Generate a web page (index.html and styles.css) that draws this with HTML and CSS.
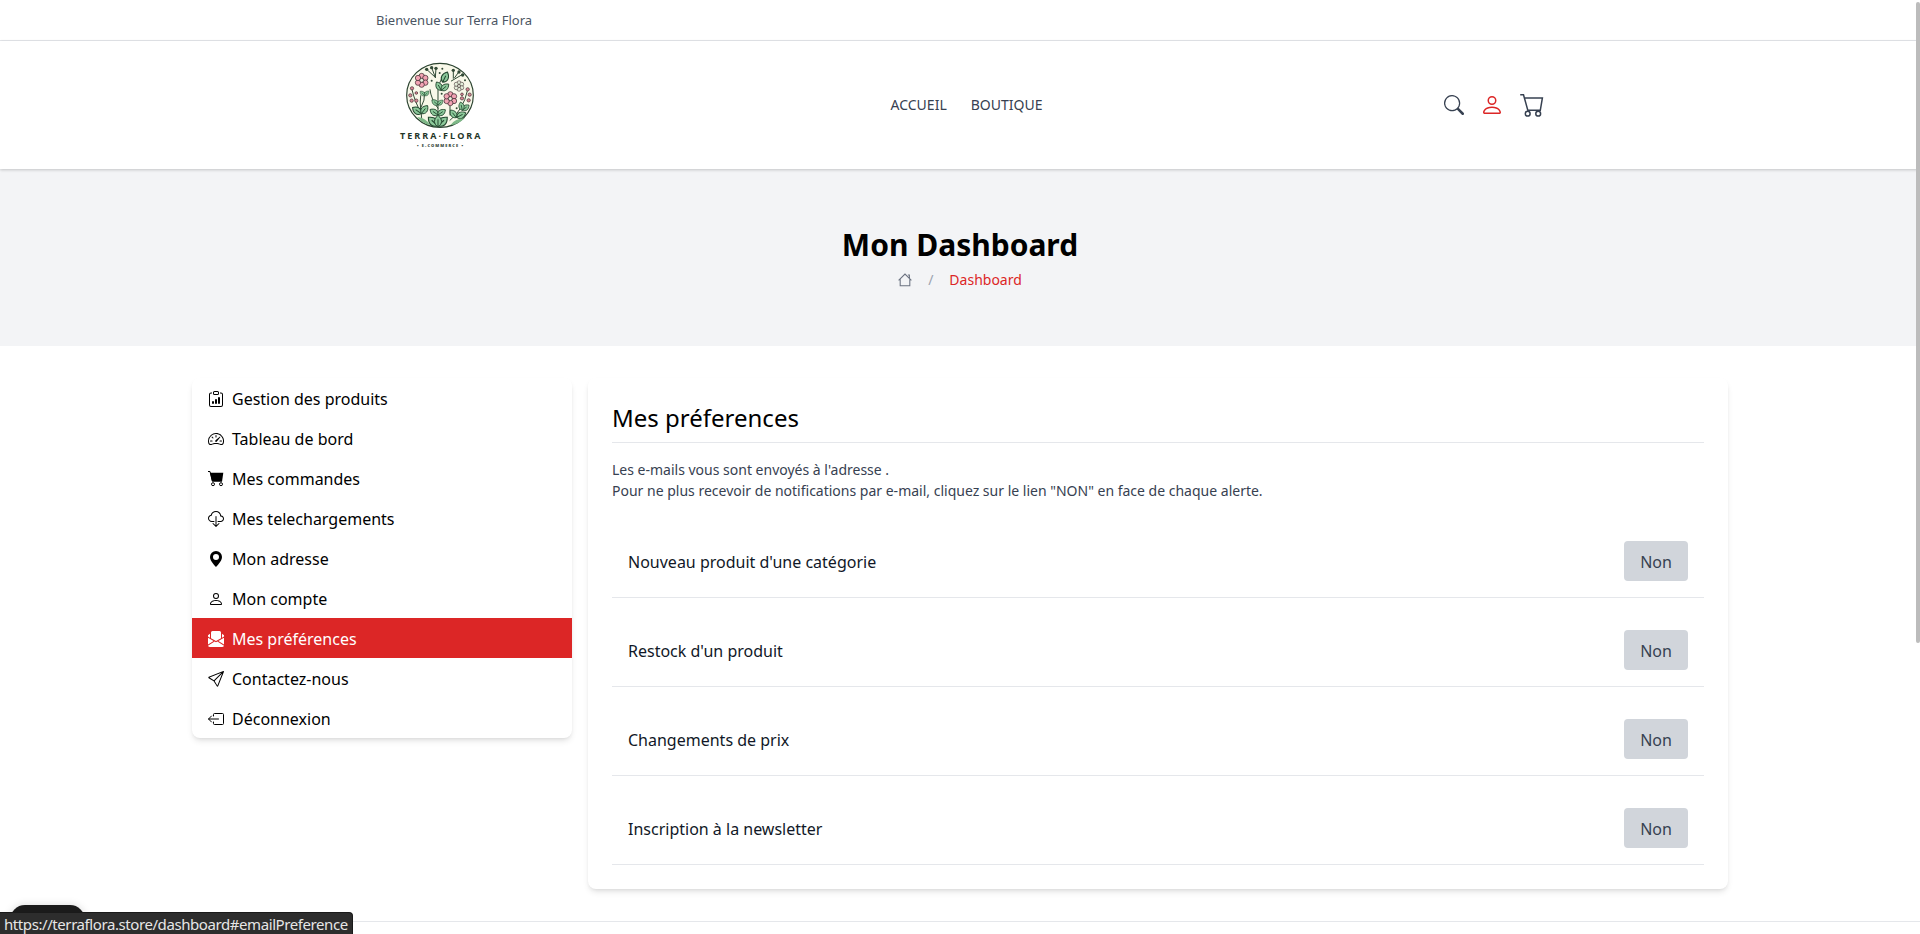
FILE: index.html
```html
<!DOCTYPE html>
<html lang="fr">
<head>
<meta charset="utf-8">
<title>Terra Flora</title>
<link rel="stylesheet" href="styles.css">
</head>
<body>
<div class="topbar"><div class="container">Bienvenue sur Terra Flora</div></div>
<header class="header">
  <div class="container header-row">
    <svg class="logo" viewBox="0 0 128 128">
      <defs>
        <path id="leaf" d="M0 0C-14-8-14-22 0-34C14-22 14-8 0 0ZM0 0V-22" stroke="#23472f" stroke-width="3"/>
        <g id="flower" stroke="#3d2a2e" stroke-width="2.2">
          <circle cy="-13" r="8"/><circle cx="11" cy="-7" r="8"/><circle cx="11" cy="7" r="8"/><circle cy="13" r="8"/><circle cx="-11" cy="7" r="8"/><circle cx="-11" cy="-7" r="8"/><circle r="6" fill="#e6eedb"/>
        </g>
      </defs>
      <g transform="translate(14 14) scale(.3333)">
        <ellipse cx="150" cy="121" rx="100" ry="96" fill="#f8f8e9" stroke="#2b4330" stroke-width="3.5"/>
        <g fill="none" stroke="#2f4a35" stroke-width="3" stroke-linecap="round">
          <path d="M144 214V95L160 60M95 190C94 170 88 150 92 122M92 170Q76 145 66 104M92 160Q106 135 104 112M180 196Q220 164 232 108M136 67L110 43M136 67L125 38M136 67L138 40M184 78L218 58M190 70L190 46M194 68L207 50M144 160Q123 132 120 104M180 152V180"/>
        </g>
        <g fill="#8cc99a">
          <use href="#leaf" transform="translate(143 212) rotate(-48) scale(1.1)"/><use href="#leaf" transform="translate(144 212) rotate(48) scale(1.1)"/>
          <use href="#leaf" transform="translate(144 215)"/>
          <use href="#leaf" transform="translate(144 180) rotate(-55) scale(.85)"/><use href="#leaf" transform="translate(144 180) rotate(55) scale(.8)"/>
          <use href="#leaf" transform="translate(144 150) rotate(-50) scale(.7)"/><use href="#leaf" transform="translate(144 150) rotate(45) scale(.6)"/>
          <use href="#leaf" transform="translate(154 106) rotate(-30) scale(.85)"/><use href="#leaf" transform="translate(154 106) rotate(50) scale(.85)"/>
          <use href="#leaf" transform="translate(158 82) rotate(25) scale(1)"/>
          <use href="#leaf" transform="translate(94 176) rotate(-55) scale(.95)"/><use href="#leaf" transform="translate(94 176) rotate(38) scale(.9)"/>
          <use href="#leaf" transform="translate(199 188) rotate(-38) scale(.85)"/><use href="#leaf" transform="translate(200 187) rotate(64) scale(.9)"/>
          <use href="#leaf" transform="translate(217 166) rotate(52) scale(.75)"/><use href="#leaf" transform="translate(217 166) rotate(-12) scale(.75)"/>
          <use href="#leaf" transform="translate(104 122) rotate(-45) scale(.55)"/><use href="#leaf" transform="translate(104 122) rotate(42) scale(.55)"/>
        </g>
        <path d="M82 186Q108 188 121 211Q94 204 82 186ZM181 211Q195 190 224 190Q206 208 181 211Z" fill="#7db887"/>
        <use href="#flower" x="95" y="76" fill="#f2a3b3"/><use href="#flower" x="181" y="131" fill="#f2a3b3"/>
        <g transform="translate(207 93) scale(.75)"><use href="#flower" fill="#e4efda"/></g>
        <g fill="#d58593" stroke="#432e30" stroke-width="2">
          <circle cx="66" cy="100" r="5"/><circle cx="61" cy="121" r="5"/><circle cx="79" cy="114" r="4"/><circle cx="65" cy="137" r="5"/><circle cx="79" cy="137" r="5"/>
          <circle cx="233" cy="103" r="5"/><circle cx="239" cy="119" r="5"/><circle cx="216" cy="118" r="4"/><circle cx="216" cy="130" r="5"/><circle cx="236" cy="136" r="5"/>
        </g>
        <g fill="#314936"><circle cx="110" cy="43" r="5"/><circle cx="125" cy="38" r="5"/><circle cx="138" cy="40" r="5"/><circle cx="190" cy="46" r="5"/><circle cx="207" cy="51" r="5"/><circle cx="218" cy="60" r="5"/><circle cx="157" cy="41" r="3"/><circle cx="149" cy="54" r="3"/><circle cx="125" cy="77" r="3"/><circle cx="225" cy="76" r="3"/><circle cx="155" cy="116" r="3"/><circle cx="200" cy="160" r="3"/></g>
      </g>
      <text class="logo-name" x="24" y="97.500" textLength="80.500" lengthAdjust="spacing">TERRA·FLORA</text>
      <text class="logo-sub" x="41" y="105.500" textLength="46" lengthAdjust="spacing">• E-COMMERCE •</text>
    </svg>
    <nav class="nav"><a>ACCUEIL</a><a>BOUTIQUE</a></nav>
    <div class="actions">
      <svg class="search" viewBox="0 0 16 16"><path d="M11.742 10.344a6.5 6.5 0 1 0-1.397 1.398h-.001c.03.04.062.078.098.115l3.85 3.85a1 1 0 0 0 1.415-1.414l-3.85-3.85a1.007 1.007 0 0 0-.115-.1zM12 6.5a5.5 5.5 0 1 1-11 0 5.5 5.5 0 0 1 11 0z"/></svg>
      <svg class="user" viewBox="0 0 16 16"><path d="M8 8a3 3 0 1 0 0-6 3 3 0 0 0 0 6zm2-3a2 2 0 1 1-4 0 2 2 0 0 1 4 0zm4 8c0 1-1 1-1 1H3s-1 0-1-1 1-4 6-4 6 3 6 4zm-1-.004c-.001-.246-.154-.986-.832-1.664C11.516 10.68 10.289 10 8 10c-2.29 0-3.516.68-4.168 1.332-.678.678-.83 1.418-.832 1.664h10z"/></svg>
      <svg class="cart" viewBox="0 0 24 24"><g fill="none" stroke="currentColor" stroke-width="1.500"><path d="M.2 1.700H3.500L7.800 17.300H20.300L22.400 5H4.400"/><circle cx="7.700" cy="20.700" r="2.400"/><circle cx="18.200" cy="20.700" r="2.400"/></g></svg>
    </div>
  </div>
</header>
<section class="hero">
  <h1>Mon Dashboard</h1>
  <div class="crumbs">
    <svg viewBox="0 0 16 16"><path fill="none" stroke="currentColor" stroke-width="1.200" d="M.7 8.500L8 1.200L15.300 8.500M2.500 7V14.500H13.500V7M11.300 2.200H13V6"/></svg>
    <span class="slash">/</span><span class="current">Dashboard</span>
  </div>
</section>
<main class="layout">
  <aside class="menu">
    <a><svg viewBox="0 0 16 16"><path d="M4 11a1 1 0 1 1 2 0v1a1 1 0 1 1-2 0v-1zm6-4a1 1 0 1 1 2 0v5a1 1 0 1 1-2 0V7zM7 9a1 1 0 0 1 2 0v3a1 1 0 1 1-2 0V9z"/><path d="M4 1.500H3a2 2 0 0 0-2 2V14a2 2 0 0 0 2 2h10a2 2 0 0 0 2-2V3.500a2 2 0 0 0-2-2h-1v1h1a1 1 0 0 1 1 1V14a1 1 0 0 1-1 1H3a1 1 0 0 1-1-1V3.500a1 1 0 0 1 1-1h1v-1z"/><path d="M9.500 1a.5.5 0 0 1 .5.5v1a.5.5 0 0 1-.5.5h-3a.5.5 0 0 1-.5-.5v-1a.5.5 0 0 1 .5-.5h3zm-3-1A1.500 1.500 0 0 0 5 1.500v1A1.500 1.500 0 0 0 6.500 4h3A1.500 1.500 0 0 0 11 2.500v-1A1.500 1.500 0 0 0 9.500 0h-3z"/></svg>Gestion des produits</a>
    <a><svg viewBox="0 0 16 16"><path d="M8 4a.5.5 0 0 1 .5.5V6a.5.5 0 0 1-1 0V4.500A.5.5 0 0 1 8 4zM3.732 5.732a.5.5 0 0 1 .707 0l.915.914a.5.5 0 1 1-.708.708l-.914-.915a.5.5 0 0 1 0-.707zM2 10a.5.5 0 0 1 .5-.5h1.586a.5.5 0 0 1 0 1H2.500A.5.5 0 0 1 2 10zm9.500 0a.5.5 0 0 1 .5-.5h1.500a.5.5 0 0 1 0 1H12a.5.5 0 0 1-.5-.5zm.754-4.246a.389.389 0 0 0-.527-.02L7.547 9.310a.91.91 0 1 0 1.302 1.258l3.434-4.297a.389.389 0 0 0-.029-.518z"/><path fill-rule="evenodd" d="M0 10a8 8 0 1 1 15.547 2.661c-.442 1.253-1.845 1.602-2.932 1.250C11.309 13.488 9.475 13 8 13c-1.474 0-3.310.488-4.615.911-1.087.352-2.490.003-2.932-1.250A7.988 7.988 0 0 1 0 10zm8-7a7 7 0 0 0-6.603 9.329c.203.575.923.876 1.680.630C4.397 12.533 6.358 12 8 12s3.604.532 4.923.960c.757.245 1.477-.056 1.680-.631A7 7 0 0 0 8 3z"/></svg>Tableau de bord</a>
    <a><svg viewBox="0 0 16 16"><path fill="none" stroke="currentColor" d="M0 .5H2L4.300 10"/><path d="M2 1.800H15.300L14 10.800H4.200Z"/><g fill="none" stroke="currentColor"><circle cx="5" cy="13.200" r="1.500"/><circle cx="13" cy="13.200" r="1.500"/></g></svg>Mes commandes</a>
    <a><svg viewBox="0 0 16 16"><path d="M4.406 1.342A5.530 5.530 0 0 1 8 0c2.690 0 4.923 2 5.166 4.579C14.758 4.804 16 6.137 16 7.773 16 9.569 14.502 11 12.687 11H10a.5.5 0 0 1 0-1h2.688C13.979 10 15 8.988 15 7.773c0-1.216-1.020-2.228-2.313-2.228h-.5v-.5C12.188 2.825 10.328 1 8 1a4.530 4.530 0 0 0-2.941 1.100c-.757.652-1.153 1.438-1.153 2.055v.448l-.445.049C2.064 4.805 1 5.952 1 7.318 1 8.785 2.230 10 3.781 10H6a.5.5 0 0 1 0 1H3.781C1.708 11 0 9.366 0 7.318c0-1.763 1.266-3.223 2.942-3.593.143-.863.698-1.723 1.464-2.383z"/><path d="M7.646 15.854a.5.5 0 0 0 .708 0l3-3a.5.5 0 0 0-.708-.708L8.500 14.293V5.500a.5.5 0 0 0-1 0v8.793l-2.146-2.147a.5.5 0 0 0-.708.708l3 3z"/></svg>Mes telechargements</a>
    <a><svg viewBox="0 0 16 16"><path d="M8 16s6-5.686 6-10A6 6 0 0 0 2 6c0 4.314 6 10 6 10zm0-7a3 3 0 1 1 0-6 3 3 0 0 1 0 6z"/></svg>Mon adresse</a>
    <a><svg viewBox="0 0 16 16"><path d="M8 8a3 3 0 1 0 0-6 3 3 0 0 0 0 6zm2-3a2 2 0 1 1-4 0 2 2 0 0 1 4 0zm4 8c0 1-1 1-1 1H3s-1 0-1-1 1-4 6-4 6 3 6 4zm-1-.004c-.001-.246-.154-.986-.832-1.664C11.516 10.680 10.289 10 8 10c-2.290 0-3.516.680-4.168 1.332-.678.678-.830 1.418-.832 1.664h10z"/></svg>Mon compte</a>
    <a class="active"><svg viewBox="0 0 16 16"><path d="M4.500 0H11.500Q13 0 13 1.500V7.200L8 9.900L3 7.200V1.500Q3 0 4.500 0ZM2 2.700V6.700L0 5.500V4.300ZM14 2.700V6.700L16 5.500V4.300ZM0 6.700L5.600 10L0 13.500ZM16 6.700L10.400 10L16 13.500ZM0 14.700L6.600 10.600L8 11.300L9.400 10.600L16 14.700Q15.500 16 14 16H2Q.5 16 0 14.700Z"/></svg>Mes préférences</a>
    <a><svg viewBox="0 0 16 16"><path d="M15.854.146a.5.5 0 0 1 .110.540l-5.819 14.547a.75.75 0 0 1-1.329.124l-3.178-4.995L.643 7.184a.75.75 0 0 1 .124-1.330L15.314.037a.5.5 0 0 1 .540.110ZM6.636 10.070l2.761 4.338L14.130 2.576 6.636 10.070Zm6.787-8.201L1.591 6.602l4.339 2.760 7.494-7.493Z"/></svg>Contactez-nous</a>
    <a><svg viewBox="0 0 16 16"><path fill="none" stroke="currentColor" stroke-linecap="round" stroke-linejoin="round" d="M5.500 5V3.500Q5.500 2.500 6.500 2.500H14.500Q15.500 2.500 15.500 3.500V12.500Q15.500 13.500 14.500 13.500H6.500Q5.500 13.500 5.500 12.500V11M10.500 8H.7M3.500 5L.5 8L3.500 11"/></svg>Déconnexion</a>
  </aside>
  <section class="panel">
    <h2>Mes préferences</h2>
    <p>Les e-mails vous sont envoyés à l'adresse .<br>Pour ne plus recevoir de notifications par e-mail, cliquez sur le lien "NON" en face de chaque alerte.</p>
    <div class="prefs">
      <div class="pref"><span>Nouveau produit d'une catégorie</span><button>Non</button></div>
      <div class="pref"><span>Restock d'un produit</span><button>Non</button></div>
      <div class="pref"><span>Changements de prix</span><button>Non</button></div>
      <div class="pref"><span>Inscription à la newsletter</span><button>Non</button></div>
    </div>
  </section>
</main>
<footer class="footer"></footer>
<div class="pill"></div>
<div class="status"><span>https://terraflora.store/dashboard#emailPreference</span></div>
<div class="scrollbar"></div>
</body>
</html>
```
FILE: styles.css
```css
* { box-sizing: border-box; }
body { margin: 0; height: 934px; overflow: hidden; background: #fff; color: #000; font: 16px/24px "Noto Sans", sans-serif; }
h1, h2, p { margin: 0; }
svg { display: block; flex: none; fill: currentColor; }
.container { width: 1168px; margin: 0 auto; }
.topbar { height: 41px; padding: 10px 0; border-bottom: 1px solid #e5e7eb; color: #4b5563; font-size: 13px; line-height: 20px; }
.header { position: relative; background: #fff; box-shadow: 0 1px 3px rgba(0,0,0,.1), 0 1px 3px rgba(0,0,0,.1); }
.header-row { display: grid; grid-template-columns: 1fr auto 1fr; align-items: center; height: 128px; color: #374151; }
.logo { width: 128px; height: 128px; }
.logo-name { font: 700 9px "Open Sans", sans-serif; fill: #1f3527; }
.logo-sub { font: 800 4px "Open Sans", sans-serif; fill: #34463a; }
.nav { display: flex; gap: 24px; padding-left: 13px; font-size: 14px; line-height: 20px; }
.actions { display: flex; justify-content: flex-end; align-items: center; gap: 16px; }
.search { width: 20px; height: 20px; }
.user { width: 24px; height: 24px; color: #dc2626; }
.cart { width: 24px; height: 24px; }
.hero { display: flex; flex-direction: column; align-items: center; gap: 7px; height: 177px; padding-top: 58px; background: #f3f4f6; }
.hero h1 { font-size: 30px; line-height: 36px; font-weight: 700; }
.crumbs { display: flex; align-items: center; gap: 16px; font-size: 14px; line-height: 20px; }
.crumbs svg { width: 14px; height: 14px; color: #6b7280; }
.slash { color: #9ca3af; }
.current { color: #dc2626; }
.layout { display: grid; grid-template-columns: 380px 1140px; gap: 16px; align-items: start; width: 1536px; margin: 32px auto; }
.menu, .panel { background: #fff; border-radius: 8px; box-shadow: 0 4px 6px -1px rgba(0,0,0,.1), 0 2px 4px -2px rgba(0,0,0,.1); }
.menu a { display: flex; align-items: center; gap: 8px; height: 40px; padding: 2px 16px 0; }
.menu svg { width: 16px; height: 16px; }
.menu .active { background: #dc2626; color: #fff; }
.panel { padding: 24px; }
.panel h2 { padding-bottom: 8px; border-bottom: 1px solid #e5e7eb; font-size: 24px; line-height: 32px; font-weight: 400; }
.panel p { margin-top: 16px; color: #374151; font-size: 14px; line-height: 21px; }
.prefs { display: flex; flex-direction: column; gap: 16px; margin-top: 24px; }
.pref { display: flex; justify-content: space-between; align-items: center; padding: 16px; border-bottom: 1px solid #e5e7eb; color: #111827; }
.pref span { padding-top: 2px; }
.pref button { width: 64px; height: 40px; padding: 2px 0 0; border: 0; border-radius: 4px; background: #d1d5db; color: #374151; font: inherit; }
.footer { border-top: 1px solid #e5e7eb; }
.pill { position: absolute; left: 10px; top: 905px; width: 75px; height: 40px; border-radius: 15px; background: #1b1b1b; box-shadow: 0 0 8px rgba(0,0,0,.15); }
.status { position: absolute; left: 0; bottom: 0; width: 353px; height: 22px; padding-left: 4px; border-top: 1px solid #1a1a1a; border-right: 1px solid #1a1a1a; border-top-right-radius: 4px; background: #2d2d2d; color: #e6e6e6; font-size: 15px; line-height: 22px; letter-spacing: -.42px; white-space: nowrap; }
.scrollbar { position: absolute; right: 0; top: 2px; width: 4px; height: 641px; border-radius: 2px; background: #bcbcbc; }
```
